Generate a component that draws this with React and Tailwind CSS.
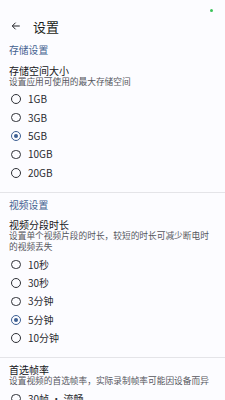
import { useState } from 'react';

const FONT = { fontFamily: '"Noto Sans CJK SC", "Noto Sans", sans-serif' };

function Radio({ label, checked, onClick }) {
    return (
        <button onClick={onClick} className="flex items-center h-[18.4px] w-full pl-[11px] text-left">
            <span className={`w-[9.5px] h-[9.5px] rounded-full border-[1.3px] flex items-center justify-center ${checked ? 'border-[#3d5f93]' : 'border-[#2e3036]'}`}>
                {checked && <span className="w-[4.5px] h-[4.5px] rounded-full bg-[#3d5f93]" />}
            </span>
            <span className="ml-[7.5px] text-[10px] leading-none text-[#2a2b30]">{label}</span>
        </button>
    );
}

function Setting({ title, desc, options, value, onChange }) {
    return (
        <div>
            <div className="px-[9px] text-[10px] leading-[13px] text-[#15161a]">{title}</div>
            <div className="px-[9px] text-[8.7px] leading-[10.5px] text-[#55565d]">{desc}</div>
            <div className="mt-[3px]">
                {options.map((o) => (
                    <Radio key={o} label={o} checked={value === o} onClick={() => onChange(o)} />
                ))}
            </div>
        </div>
    );
}

export default function App() {
    const [storage, setStorage] = useState('5GB');
    const [segment, setSegment] = useState('5分钟');
    const [fps, setFps] = useState('');

    return (
        <div className="w-[225px] h-[400px] overflow-hidden bg-[#fcfcff]" style={FONT}>
            <div className="h-[17px] flex justify-end pr-[12px] pt-[9px]">
                <span className="w-[3px] h-[3px] rounded-full bg-[#3cc35a]" />
            </div>
            <div className="h-[18px] flex items-center">
                <svg className="ml-[11px] w-[10px] h-[10px]" viewBox="0 0 24 24" fill="none" stroke="#1f2024" strokeWidth="2.4">
                    <path d="M21 12H4M11 4l-8 8 8 8" />
                </svg>
                <span className="ml-[12px] text-[13px] leading-none text-[#1b1c20]">设置</span>
            </div>

            <div className="mt-[8px] px-[9px] text-[9.8px] leading-[14px] text-[#44628f]">存储设置</div>
            <div className="mt-[6.5px]">
                <Setting
                    title="存储空间大小"
                    desc="设置应用可使用的最大存储空间"
                    options={['1GB', '3GB', '5GB', '10GB', '20GB']}
                    value={storage}
                    onChange={setStorage}
                />
            </div>

            <div className="mt-[10px] h-px bg-[#e4e4e8]" />

            <div className="mt-[5px] px-[9px] text-[9.8px] leading-[14px] text-[#44628f]">视频设置</div>
            <div className="mt-[6.5px]">
                <Setting
                    title="视频分段时长"
                    desc="设置单个视频片段的时长，较短的时长可减少断电时的视频丢失"
                    options={['10秒', '30秒', '3分钟', '5分钟', '10分钟']}
                    value={segment}
                    onChange={setSegment}
                />
            </div>

            <div className="mt-[10px] h-px bg-[#e4e4e8]" />

            <div className="mt-[4.5px]">
                <Setting
                    title="首选帧率"
                    desc="设置视频的首选帧率，实际录制帧率可能因设备而异"
                    options={['30帧 · 流畅', '60帧 · 高帧率']}
                    value={fps}
                    onChange={setFps}
                />
            </div>
        </div>
    );
}
